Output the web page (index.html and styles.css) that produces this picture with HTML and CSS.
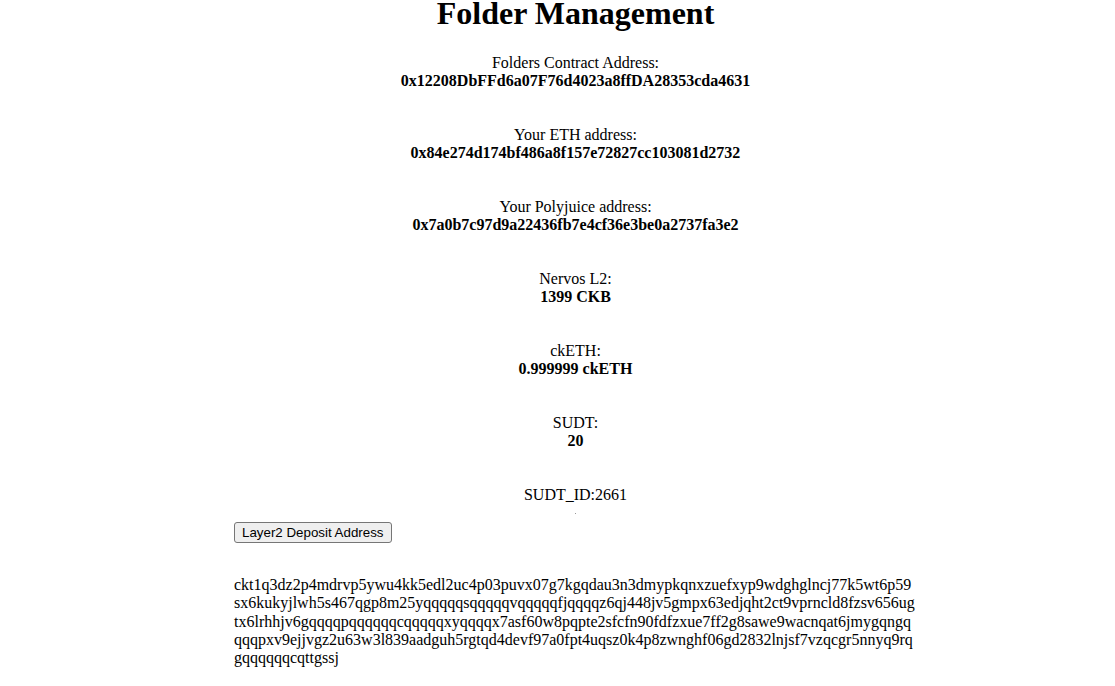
FILE: index.html
```html
<!DOCTYPE html>
<html>
<head>
<meta charset="utf-8">
<title>Folder Management</title>
<link rel="stylesheet" href="styles.css">
</head>
<body>
<div class="page">
  <h1 class="title">Folder Management</h1>
  <div class="info">
    <div class="group">Folders Contract Address:<br><b>0x12208DbFFd6a07F76d4023a8ffDA28353cda4631</b></div>
    <div class="group">Your ETH address:<br><b>0x84e274d174bf486a8f157e72827cc103081d2732</b></div>
    <div class="group">Your Polyjuice address:<br><b>0x7a0b7c97d9a22436fb7e4cf36e3be0a2737fa3e2</b></div>
    <div class="group">Nervos L2:<br><b>1399 CKB</b></div>
    <div class="group">ckETH:<br><b>0.999999 ckETH</b></div>
    <div class="group">SUDT:<br><b>20</b></div>
    <div class="sudt-id">SUDT_ID:2661</div>
    <div class="dot-line"><span class="dot"></span></div>
  </div>
  <button class="btn">Layer2 Deposit Address</button>
  <div class="deposit">ckt1q3dz2p4mdrvp5ywu4kk5edl2uc4p03puvx07g7kgqdau3n3dmypkqnxzuefxyp9wdghglncj77k5wt6p59sx6kukyjlwh5s467qgp8m25yqqqqqsqqqqqvqqqqqfjqqqqz6qj448jv5gmpx63edjqht2ct9vprncld8fzsv656ugtx6lrhhjv6gqqqqpqqqqqqcqqqqqxyqqqqx7asf60w8pqpte2sfcfn90fdfzxue7ff2g8sawe9wacnqat6jmygqngqqqqpxv9ejjvgz2u63w3l839aadguh5rgtqd4devf97a0fpt4uqsz0k4p8zwnghf06gd2832lnjsf7vzqcgr5nnyq9rqgqqqqqqcqttgssj</div>
</div>
</body>
</html>
```

FILE: styles.css
```css
html, body {
  margin: 0;
  padding: 0;
  background: #ffffff;
}

body {
  font-family: "Liberation Serif", "Times New Roman", serif;
  font-size: 16px;
  color: #000000;
}

.page {
  width: 683px;
  margin-left: 234px;
}

.title {
  font-size: 32px;
  font-weight: bold;
  text-align: center;
  margin: -5px 0 22px;
  line-height: normal;
}

.info {
  text-align: center;
  line-height: 18px;
}

.group {
  margin-bottom: 36px;
}

.sudt-id {
  height: 18px;
}

.dot-line {
  height: 18px;
  display: flex;
  justify-content: center;
  align-items: center;
}

.dot {
  display: block;
  width: 1px;
  height: 1px;
  background: #9a9a9a;
}

.btn {
  display: block;
  margin: 0;
  font-family: "Liberation Sans", Arial, sans-serif;
  font-size: 13.333px;
  background: #efefef;
  color: #000;
  border: 1px solid #767676;
  border-radius: 3px;
  padding: 1px 7px;
  height: 21px;
  line-height: normal;
}

.deposit {
  margin-top: 33px;
  word-break: break-all;
  line-height: 18.3px;
}
```
